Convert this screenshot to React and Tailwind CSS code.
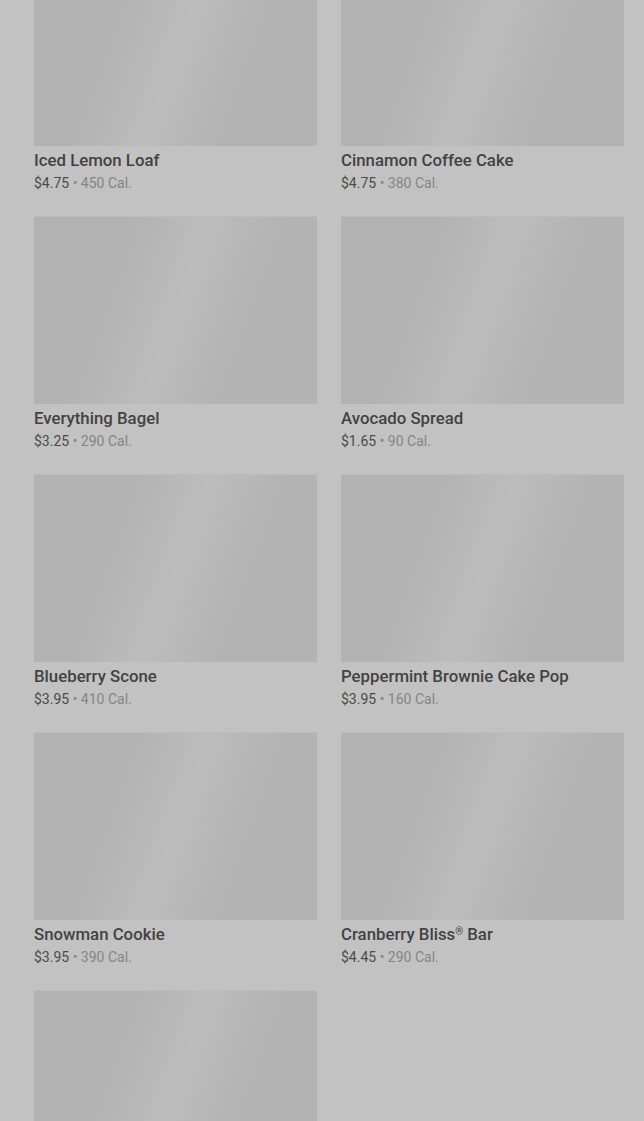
const items = [
  { name: 'Iced Lemon Loaf', price: '$4.75', cal: '450 Cal.' },
  { name: 'Cinnamon Coffee Cake', price: '$4.75', cal: '380 Cal.' },
  { name: 'Everything Bagel', price: '$3.25', cal: '290 Cal.' },
  { name: 'Avocado Spread', price: '$1.65', cal: '90 Cal.' },
  { name: 'Blueberry Scone', price: '$3.95', cal: '410 Cal.' },
  { name: 'Peppermint Brownie Cake Pop', price: '$3.95', cal: '160 Cal.' },
  { name: 'Snowman Cookie', price: '$3.95', cal: '390 Cal.' },
  { name: 'Cranberry Bliss® Bar', price: '$4.45', cal: '290 Cal.' },
  { name: '', price: '', cal: '' },
]

// small raised ® like the menu does
const renderName = (name) =>
  name.split('®').map((part, i, arr) => (
    <span key={i}>
      {part}
      {i < arr.length - 1 && <span className="text-[10px] align-[5px] leading-none">®</span>}
    </span>
  ))

export default function App() {
  return (
    <div className="h-[1121px] overflow-hidden bg-[#c2c2c2]" style={{ fontFamily: 'Roboto, "Noto Sans", sans-serif' }}>
      <div className="-mt-[42px] pl-[34px] pr-[20px] grid grid-cols-2 gap-x-6 gap-y-[23px]">
        {items.map((item, i) => (
          <div key={i}>
            {/* image placeholder */}
            <div className="h-[188px] bg-[linear-gradient(110deg,#b2b2b2_28%,#bcbcbc_50%,#b3b3b3_72%)] border-t border-[#bcbcbc]" />
            {item.name && (
              <>
                <p className="mt-0.5 text-[16.8px] leading-6 font-medium text-[#424242]">{renderName(item.name)}</p>
                <p className="mt-px text-[14px] leading-5 text-[#4b4b4b]">
                  {item.price} <span className="text-[#858585]">• {item.cal}</span>
                </p>
              </>
            )}
          </div>
        ))}
      </div>
    </div>
  )
}
